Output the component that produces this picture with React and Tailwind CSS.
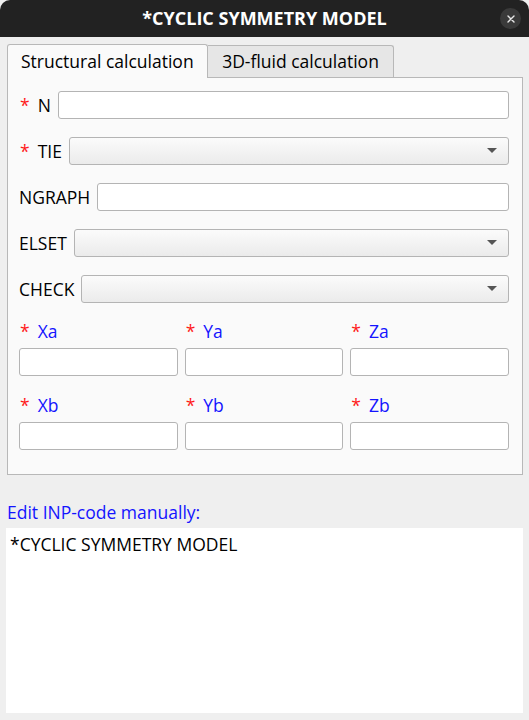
import React from 'react';

const font = { fontFamily: '"Open Sans", "Noto Sans", sans-serif' };

function Req() {
  return <span className="text-[#ff1a1a] mr-[8px]">*</span>;
}

function TextInput({ className = '' }) {
  return (
    <input
      type="text"
      className={`h-[28px] rounded-[3px] border border-[#b4b4b4] bg-white px-2 outline-none ${className}`}
    />
  );
}

function Combo({ className = '' }) {
  return (
    <div
      className={`h-[28px] rounded-[3px] border border-[#b4b4b4] bg-gradient-to-b from-[#fbfbfb] to-[#ebebeb] flex items-center justify-end pr-[11px] ${className}`}
    >
      <svg width="10" height="6" viewBox="0 0 10 6">
        <path d="M0 0 L10 0 L5 5 Z" fill="#555" />
      </svg>
    </div>
  );
}

function Row({ children }) {
  return <div className="flex items-center gap-[7px]">{children}</div>;
}

function Coord({ name }) {
  return (
    <div className="flex flex-col">
      <div className="h-[26px] pl-[1px] flex items-center text-[#1414ff]">
        <Req />
        {name}
      </div>
      <TextInput className="w-full mt-[4px]" />
    </div>
  );
}

export default function App() {
  return (
    <div className="w-[529px] h-[720px] bg-[#efefef] flex flex-col text-[17.5px] text-black" style={font}>
      <div className="h-[37px] bg-[#222222] rounded-t-[10px] flex items-center justify-center relative">
        <span className="text-white font-bold text-[18px]">*CYCLIC SYMMETRY MODEL</span>
        <div className="absolute right-[8px] top-[8px] w-[21px] h-[21px] rounded-full bg-[#3a3a3a] flex items-center justify-center">
          <svg width="8" height="8" viewBox="0 0 8 8">
            <path d="M1 1 L7 7 M7 1 L1 7" stroke="#e8e8e8" strokeWidth="1.4" strokeLinecap="round" />
          </svg>
        </div>
      </div>

      <div className="px-[7px] pt-[6px] flex items-end">
        <div className="w-[201px] h-[34px] bg-[#fafafa] border border-b-0 border-[#b8b8b8] rounded-t-[3px] flex items-center pl-[13px] relative top-[1px] z-10">
          Structural calculation
        </div>
        <div className="w-[186px] h-[32px] bg-[#e6e6e6] border border-l-0 border-b-0 border-[#b8b8b8] rounded-tr-[3px] flex items-center justify-center">
          3D-fluid calculation
        </div>
      </div>

      <div className="mx-[7px] mr-[6px] h-[398px] bg-[#fafafa] border border-[#b8b8b8] pl-[11px] pr-[13px] pt-[13px] flex flex-col">
        <div className="flex flex-col gap-[18px]">
          <Row>
            <span className="pl-[1px]"><Req />N</span>
            <TextInput className="flex-1" />
          </Row>
          <Row>
            <span className="pl-[1px]"><Req />TIE</span>
            <Combo className="flex-1" />
          </Row>
          <Row>
            <span>NGRAPH</span>
            <TextInput className="flex-1" />
          </Row>
          <Row>
            <span>ELSET</span>
            <Combo className="flex-1" />
          </Row>
          <Row>
            <span>CHECK</span>
            <Combo className="flex-1" />
          </Row>
        </div>
        <div className="grid grid-cols-3 gap-x-[7px] gap-y-[16px] mt-[15px]">
          <Coord name="Xa" />
          <Coord name="Ya" />
          <Coord name="Za" />
          <Coord name="Xb" />
          <Coord name="Yb" />
          <Coord name="Zb" />
        </div>
      </div>

      <div className="px-[7px] pt-[24px] h-[53px] text-[#1414ff]">Edit INP-code manually:</div>
      <div className="mx-[6px] h-[185px] bg-white px-[4px] pt-[3px]">*CYCLIC SYMMETRY MODEL</div>
    </div>
  );
}
